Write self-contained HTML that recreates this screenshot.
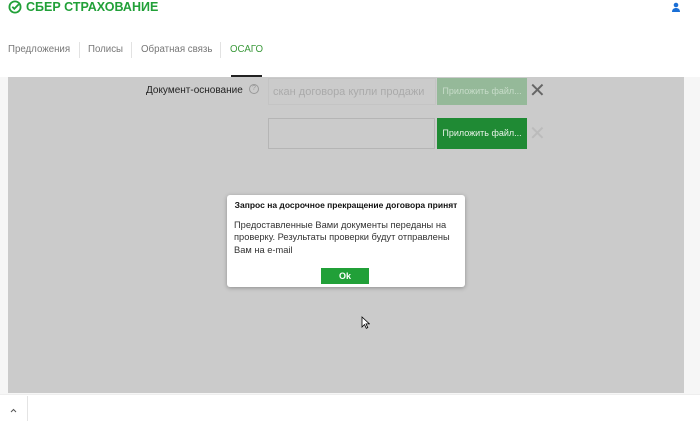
<!DOCTYPE html><html><head><meta charset="utf-8"><style>
*{margin:0;padding:0;box-sizing:border-box}
body{width:700px;height:421px;overflow:hidden;background:#fff;font-family:"Liberation Sans","DejaVu Sans",sans-serif;position:relative}
.a{position:absolute}
.n{top:44px;font-size:9.7px;color:#777;white-space:nowrap}
</style></head><body>
<div class="a" style="left:8px;top:0;width:14px;height:14px">
<svg width="14" height="14" viewBox="0 0 14 14"><circle cx="7" cy="7" r="5.6" fill="none" stroke="#21a038" stroke-width="1.8"/><path d="M4.3 6.8l2 2 4.5-4.5" fill="none" stroke="#21a038" stroke-width="1.8"/></svg></div>
<div class="a" style="left:26px;top:0px;font-size:12.5px;font-weight:bold;color:#21a038;white-space:nowrap">СБЕР СТРАХОВАНИЕ</div>
<svg class="a" style="left:671px;top:2px" width="10" height="11" viewBox="0 0 10 11"><circle cx="5" cy="3" r="2.3" fill="#1a6fd6"/><path d="M1 10c0-3 2-4 4-4s4 1 4 4z" fill="#1a6fd6"/></svg>
<div class="a n" style="left:8px">Предложения</div>
<div class="a" style="left:79px;top:42px;width:1px;height:16px;background:#e2e2e2"></div>
<div class="a n" style="left:88px">Полисы</div>
<div class="a" style="left:131px;top:42px;width:1px;height:16px;background:#e2e2e2"></div>
<div class="a n" style="left:141px">Обратная связь</div>
<div class="a" style="left:220px;top:42px;width:1px;height:16px;background:#e2e2e2"></div>
<div class="a n" style="left:230px;color:#3c9a3c">ОСАГО</div>
<div class="a" style="left:231px;top:75px;width:31px;height:2px;background:#222"></div>
<div class="a" style="left:0;top:77px;width:700px;height:317px;background:#f6f6f6"></div>
<div class="a" style="left:8px;top:77px;width:676px;height:316px;background:#cbcbcb"></div>
<div class="a" style="left:146px;top:85px;font-size:10px;color:#222;white-space:nowrap">Документ-основание</div>
<div class="a" style="left:249px;top:84px;width:10px;height:10px;border:1px solid #999;border-radius:50%;font-size:7px;color:#999;text-align:center;line-height:8px">?</div>
<div class="a" style="left:268px;top:78px;width:168px;height:27px;border:1px solid #c4c4c4;font-size:11px;color:#aaa;padding:7px 4px;white-space:nowrap;overflow:hidden">скан договора купли продажи</div>
<div class="a" style="left:437px;top:78px;width:90px;height:27px;background:#95b999;color:#c7dcc9;font-size:9px;text-align:center;line-height:27px">Приложить файл...</div>
<div class="a" style="left:529px;top:82px;font-size:20px;color:#666;line-height:18px">✕</div>
<div class="a" style="left:268px;top:118px;width:167px;height:31px;border:1px solid #b5b5b5"></div>
<div class="a" style="left:437px;top:118px;width:90px;height:31px;background:#1f8a34;color:#e8f3e8;font-size:9px;text-align:center;line-height:31px">Приложить файл...</div>
<div class="a" style="left:529px;top:125px;font-size:20px;color:#bbb;line-height:18px">✕</div>
<div class="a" style="left:227px;top:195px;width:238px;height:92px;background:#fff;border-radius:3px;box-shadow:0 1px 4px rgba(0,0,0,.3)">
<div style="position:absolute;left:0;right:0;top:5px;text-align:center;font-size:8.5px;font-weight:bold;color:#111">Запрос на досрочное прекращение договора принят</div>
<div style="position:absolute;left:7px;top:24px;width:228px;font-size:9.3px;line-height:12.3px;color:#333">Предоставленные Вами документы переданы на проверку. Результаты проверки будут отправлены Вам на e-mail</div>
<div style="position:absolute;left:94px;top:73px;width:48px;height:16px;background:#21a038;color:#fff;font-size:9px;font-weight:bold;text-align:center;line-height:16px">Ok</div>
</div>
<svg class="a" style="left:361px;top:316px" width="9" height="13" viewBox="0 0 9 13"><path d="M1 1v10l2.5-2.5 1.8 3.8 1.5-.7-1.8-3.7H8.5z" fill="#fff" stroke="#000" stroke-width="0.8"/></svg>
<div class="a" style="left:0;top:394px;width:700px;height:1px;background:#eee"></div>
<div class="a" style="left:27px;top:396px;width:1px;height:25px;background:#e4e4e4"></div>
<svg class="a" style="left:10px;top:408px" width="7" height="5" viewBox="0 0 7 5"><path d="M1 4l2.5-2.5L6 4" fill="none" stroke="#555" stroke-width="1"/></svg>
</body></html>
